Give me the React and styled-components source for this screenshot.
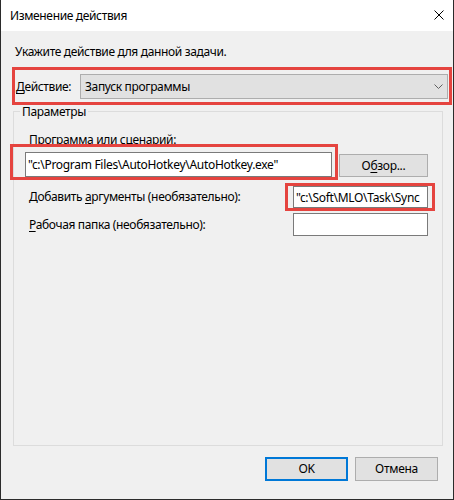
import React from 'react'
import styled, { createGlobalStyle } from 'styled-components'

const GlobalStyle = createGlobalStyle`
  html, body {
    margin: 0;
    padding: 0;
    background: #ffffff;
  }
  body {
    font-family: "Noto Sans", "Open Sans", sans-serif;
    font-size: 12px;
    letter-spacing: -0.35px;
    color: #000000;
  }
`

export default function App() {
  return (
    <>
      <GlobalStyle />
      <Window>
        <TitleBar>
          <Title>Изменение действия</Title>
          <CloseButton>
            <svg width="10" height="10" viewBox="0 0 10 10">
              <path d="M0.5 0.5 L9.5 9.5 M9.5 0.5 L0.5 9.5" stroke="#000" strokeWidth="1" fill="none" />
            </svg>
          </CloseButton>
        </TitleBar>

        <Body>
          <Prompt>Укажите действие для данной задачи.</Prompt>

          <ActionRow>
            <Mark $top={-7} $right={-4} $bottom={-6} $left={-4} />
            <FieldLabel $width={64}><u>Д</u>ействие:</FieldLabel>
            <Combo>
              <span>Запуск программы</span>
              <svg width="9" height="5" viewBox="0 0 9 5">
                <path d="M0.5 0.5 L4.5 4.5 L8.5 0.5" stroke="#606060" strokeWidth="1" fill="none" />
              </svg>
            </Combo>
          </ActionRow>

          <GroupBox>
            <Caption>Параметры</Caption>
            <FieldLabel $top={13}>Программа или сценарий:</FieldLabel>
            <ProgramRow>
              <Marked>
                <Mark $top={-8} $right={-6} $bottom={-3} $left={-15} />
                <TextBox $width={307} $height={25} readOnly defaultValue={'"c:\\Program Files\\AutoHotkey\\AutoHotkey.exe"'} />
              </Marked>
              <Button $width={89} $height={23}>О<u>б</u>зор...</Button>
            </ProgramRow>

            <OptionRow $top={9}>
              <FieldLabel>Добавить <u>а</u>ргументы (необязательно):</FieldLabel>
              <Marked>
                <Mark $top={-3} $right={-7} $bottom={-3} $left={-8} />
                <TextBox $width={135} $height={22} readOnly defaultValue={'"c:\\Soft\\MLO\\Task\\Sync'} />
              </Marked>
            </OptionRow>

            <OptionRow $top={5}>
              <FieldLabel><u>Р</u>абочая папка (необязательно):</FieldLabel>
              <TextBox $width={135} $height={23} readOnly defaultValue="" />
            </OptionRow>
          </GroupBox>

          <Footer>
            <Button $width={83} $height={24} $default>OK</Button>
            <Button $width={83} $height={24}>Отмена</Button>
          </Footer>
        </Body>
      </Window>
    </>
  )
}

const Window = styled.div`
  width: 454px;
  height: 500px;
  box-sizing: border-box;
  border: 1px solid #2b2b2b;
  border-top: none;
  display: flex;
  flex-direction: column;
  background: #f0f0f0;
`

const TitleBar = styled.div`
  height: 31px;
  flex: none;
  background: #ffffff;
  display: flex;
  align-items: center;
  justify-content: space-between;
  padding: 0 9px 0 9px;
`

const Title = styled.div`
  line-height: 16px;
  margin-top: 1px;
`

const CloseButton = styled.div`
  width: 10px;
  height: 10px;
  display: flex;
  margin-top: -1px;
`

const Body = styled.div`
  flex: 1;
  display: flex;
  flex-direction: column;
  padding: 13px 10px 0 14px;
`

const Prompt = styled.div`
  line-height: 16px;
`

const ActionRow = styled.div`
  position: relative;
  display: flex;
  align-items: center;
  margin: 14px -5px 0 1px;
`

const Mark = styled.div`
  position: absolute;
  top: ${p => p.$top}px;
  right: ${p => p.$right}px;
  bottom: ${p => p.$bottom}px;
  left: ${p => p.$left}px;
  border: 3px solid #e5443f;
  pointer-events: none;
  z-index: 2;
`

const Marked = styled.div`
  position: relative;
  display: flex;
`

const FieldLabel = styled.div`
  line-height: 16px;
  white-space: nowrap;
  width: ${p => (p.$width ? `${p.$width}px` : 'auto')};
  flex: none;
  margin-top: ${p => p.$top || 0}px;

  u {
    text-decoration-thickness: 1px;
    text-underline-offset: 2px;
  }
`

const Combo = styled.div`
  flex: 1;
  height: 25px;
  box-sizing: border-box;
  background: #e1e1e1;
  border: 1px solid #adadad;
  display: flex;
  align-items: center;
  justify-content: space-between;
  padding: 0 4px 0 4px;

  span {
    line-height: 16px;
  }
`

const GroupBox = styled.section`
  margin: 12px 0 0 -2px;
  height: 335px;
  box-sizing: border-box;
  border: 1px solid #dcdcdc;
  padding: 0 14px 0 15px;
  display: flex;
  flex-direction: column;
`

const Caption = styled.div`
  align-self: flex-start;
  line-height: 15px;
  margin: -8px 0 0 -9px;
  padding: 0 2px;
  background: #f0f0f0;
`

const ProgramRow = styled.div`
  display: flex;
  align-items: flex-end;
  gap: 7px;
  margin: 4px 0 0 -4px;
`

const OptionRow = styled.div`
  display: flex;
  align-items: center;
  justify-content: space-between;
  margin-top: ${p => p.$top}px;
`

const TextBox = styled.input`
  width: ${p => p.$width}px;
  height: ${p => p.$height}px;
  box-sizing: border-box;
  border: 1px solid #7a7a7a;
  background: #ffffff;
  padding: 0 2px;
  margin: 0;
  font-family: "Noto Sans", "Open Sans", sans-serif;
  font-size: 12px;
  letter-spacing: -0.3px;
  color: #000000;
  outline: none;
`

const Button = styled.button`
  width: ${p => p.$width}px;
  height: ${p => p.$height}px;
  box-sizing: border-box;
  flex: none;
  margin: 0;
  padding: 0;
  background: #e1e1e1;
  border: ${p => (p.$default ? '2px solid #0078d7' : '1px solid #adadad')};
  font-family: "Noto Sans", "Open Sans", sans-serif;
  font-size: 12px;
  letter-spacing: -0.3px;
  color: #000000;
  line-height: 16px;

  u {
    text-underline-offset: 2px;
  }
`

const Footer = styled.div`
  display: flex;
  justify-content: flex-end;
  gap: 7px;
  margin-top: 11px;
  padding-right: 5px;
`
